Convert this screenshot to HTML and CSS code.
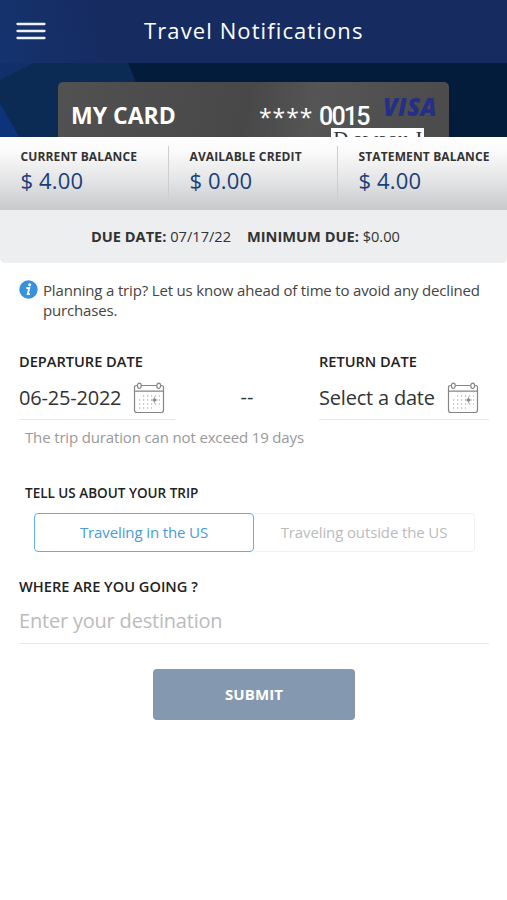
FILE: index.html
```html
<!DOCTYPE html>
<html lang="en">
<head>
<meta charset="utf-8">
<meta name="viewport" content="width=device-width, initial-scale=1">
<title>Travel Notifications</title>
<link rel="stylesheet" href="styles.css">
</head>
<body>
<svg class="defs" aria-hidden="true">
  <symbol id="calendar" viewBox="0 0 32 32">
    <g fill="none" stroke="#858585" stroke-width="1.2">
      <path d="M4 3.500H3.500Q1.500 3.500 1.500 5.500V28Q1.500 30.500 4 30.500H28Q30.500 30.500 30.500 28V5.500Q30.500 3.500 28.500 3.500H28M8.500 3.500H23.500M1.500 9.200H30.500"/>
      <ellipse cx="6.300" cy="3.800" rx="1.900" ry="2.700"/>
      <ellipse cx="25.700" cy="3.800" rx="1.900" ry="2.700"/>
    </g>
    <g fill="none" stroke="#999" stroke-width="1.200" stroke-dasharray="1.200 2.800">
      <path d="M10 14H27M6 18H27M6 22H27M6 26H19"/>
    </g>
    <path d="M21.500 14.500V21.500M18 18H25" stroke="#999" stroke-width=".7"/>
    <circle cx="21.500" cy="18" r="1.700" fill="#888"/>
  </symbol>
</svg>
<header class="topbar">
  <svg class="menu" viewBox="0 0 30 20" width="30" height="20"><path d="M1.500 3H28.500M1.500 10H28.500M1.500 17H28.500" stroke="#eef2ff" stroke-width="2.300" stroke-linecap="round"/></svg>
  <h1>Travel Notifications</h1>
</header>
<section class="hero">
  <svg class="hero-bg" viewBox="0 0 507 74" width="507" height="74" preserveAspectRatio="none">
    <path d="M0 0H128L158 74H0Z" fill="#0b2a54"/>
    <path d="M0 0H34L0 17Z" fill="#112f68"/>
    <path d="M0 40L19 74H0Z" fill="#0d347a"/>
  </svg>
  <div class="card">
    <span class="card-name">MY CARD</span>
    <span class="card-stars">****</span>
    <span class="card-number">0015</span>
    <span class="visa">VISA</span>
    <span class="brand">D awaou J</span>
  </div>
</section>
<section class="balances">
  <div class="balance"><span class="label">CURRENT BALANCE</span><span class="amount">$ 4.00</span></div>
  <div class="balance"><span class="label">AVAILABLE CREDIT</span><span class="amount">$ 0.00</span></div>
  <div class="balance"><span class="label">STATEMENT BALANCE</span><span class="amount">$ 4.00</span></div>
</section>
<section class="due">
  <span class="due-date"><b>DUE DATE:</b> 07/17/22</span>
  <span class="due-min"><b>MINIMUM DUE:</b> $0.00</span>
</section>
<main>
  <div class="notice">
    <svg width="19" height="19" viewBox="0 0 19 19"><circle cx="9.500" cy="9.500" r="9.200" fill="#3791dc"/><circle cx="10.700" cy="4.800" r="1.500" fill="#fff"/><path d="M7.300 8H10.300L8.700 14.200H11" fill="none" stroke="#fff" stroke-width="1.800"/></svg>
    <p>Planning a trip? Let us know ahead of time to avoid any declined<br>purchases.</p>
  </div>
  <div class="dates">
    <div class="date departure">
      <h2>DEPARTURE DATE</h2>
      <div class="date-value"><span>06-25-2022</span><svg width="32" height="32"><use href="#calendar"/></svg></div>
    </div>
    <span class="dash">--</span>
    <div class="date return">
      <h2>RETURN DATE</h2>
      <div class="date-value"><span>Select a date</span><svg width="32" height="32"><use href="#calendar"/></svg></div>
    </div>
  </div>
  <p class="hint">The trip duration can not exceed 19 days</p>
  <h2 class="about">TELL US ABOUT YOUR TRIP</h2>
  <div class="toggle">
    <div class="option selected">Traveling in the US</div>
    <div class="option other">Traveling outside the US</div>
  </div>
  <h2 class="where">WHERE ARE YOU GOING ?</h2>
  <div class="destination">Enter your destination</div>
  <div class="submit">SUBMIT</div>
</main>
</body>
</html>
```
FILE: styles.css
```css
* { box-sizing: border-box; }
body { margin: 0; width: 507px; height: 900px; overflow: hidden; background: #fff; font-family: "Open Sans", sans-serif; color: #333; white-space: nowrap; }
h1, h2, p { margin: 0; }
.defs { display: none; }
.topbar { display: flex; align-items: center; height: 63px; padding: 0 0 2px 16px; background: linear-gradient(75deg, #14336f 0, #162c61 20%, #162c61 100%); color: #fff; }
.menu { display: block; flex: none; }
h1 { margin: -2px 0 0 98px; font-size: 22px; line-height: 30px; font-weight: 400; letter-spacing: 1.1px; }
.hero { position: relative; height: 74px; padding: 19px 58px 0; overflow: hidden; background: #041c3b; }
.hero-bg { position: absolute; top: 0; left: 0; }
.card { position: relative; display: flex; height: 60px; padding-left: 13px; border-radius: 5px; background: linear-gradient(100deg, #515151, #484848 48%, #555 65%, #4b4b4b); color: #fff; }
.card-name { width: 188px; font-size: 23px; line-height: 67px; font-weight: 700; }
.card-stars { width: 60px; font-size: 23px; line-height: 70px; letter-spacing: .9px; }
.card-number { width: 64px; font: 500 25px/69px Roboto, sans-serif; letter-spacing: -1.8px; }
.visa { font-size: 24px; line-height: 50px; font-weight: 800; font-style: italic; letter-spacing: .3px; color: #252f86; }
.brand { position: absolute; left: 273px; top: 46px; width: 93px; height: 20px; background: #fff; color: #333; text-align: center; font: 21px/23px "Liberation Serif", serif; }
.balances { display: grid; grid-template-columns: 169px 169px 169px; height: 73px; padding-top: 9px; background: linear-gradient(#fff 0, #fafafa 20%, #e3e4e5 60%, #c7c9cb); }
.balance { display: flex; flex-direction: column; height: 53px; padding-left: 20.500px; border-right: 1px solid #ccced0; }
.balance:last-child { border: 0; }
.label { font-size: 12px; line-height: 21px; font-weight: 700; letter-spacing: .13px; }
.amount { font-size: 22px; line-height: 26px; letter-spacing: .15px; color: #1b3e7a; }
.due { display: flex; height: 53px; padding-left: 91px; gap: 16px; background: #edeef0; font-size: 14.600px; line-height: 53px; border-radius: 0 0 5px 5px; }
.due b { color: #333; }
main { padding: 17px 18px 0 19px; }
.notice { display: flex; gap: 5px; font-size: 15px; letter-spacing: -.17px; line-height: 20px; color: #444; }
.notice svg { flex: none; }
.dates { display: flex; height: 70px; margin-top: 31px; }
h2 { font-size: 14.600px; line-height: 20px; font-weight: 600; color: #222; }
.departure { width: 156px; }
.return { width: 170px; }
.dash { width: 144px; padding-top: 26px; text-align: center; font-size: 20px; line-height: 40px; }
.date-value { display: flex; justify-content: space-between; height: 49px; padding: 11px 10px 0 0; border-bottom: 1px solid #e6e6e6; font-size: 20px; letter-spacing: -.2px; line-height: 32px; }
.return .date-value { font-size: 20px; }
.hint { margin: 5px 0 0 6px; font-size: 15px; letter-spacing: -.15px; line-height: 22px; color: #999; }
.about { margin: 35px 0 0 6px; font-size: 13.500px; }
.toggle { display: grid; grid-template-columns: 220px 221px; height: 39px; margin: 10px 0 0 15px; font-size: 15px; letter-spacing: -.12px; line-height: 36px; text-align: center; }
.option { border: 1px solid #f2f2f2; border-left: 0; border-radius: 0 4px 4px 0; color: #bbb; }
.selected { border: 1.500px solid #64aee7; border-radius: 4px; color: #489bdc; }
.where { margin-top: 24px; }
.destination { height: 48px; border-bottom: 1px solid #e6e6e6; font-size: 20px; letter-spacing: -.2px; line-height: 50px; color: #bbb; }
.submit { width: 202px; height: 51px; margin: 25px 0 0 134px; border-radius: 4px; background: #8498b0; color: #fff; font-size: 15px; line-height: 50px; font-weight: 700; text-align: center; letter-spacing: .1px; }
```
